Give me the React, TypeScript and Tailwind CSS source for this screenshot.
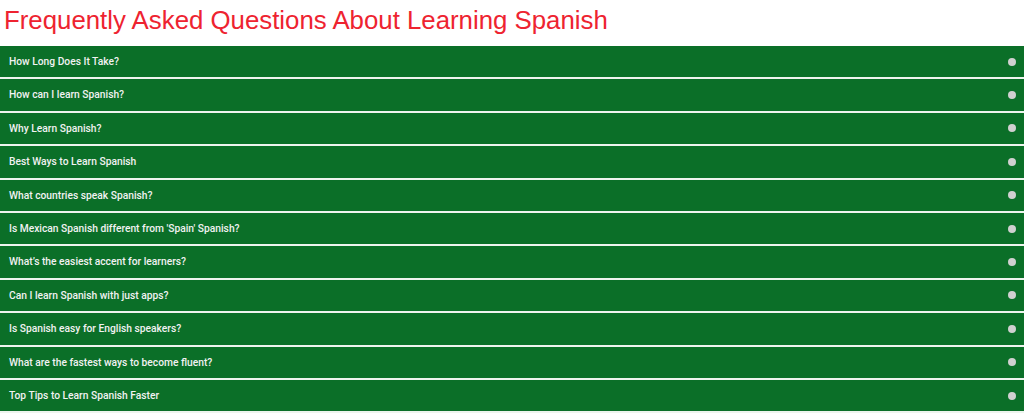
const questions = [
  'How Long Does It Take?',
  'How can I learn Spanish?',
  'Why Learn Spanish?',
  'Best Ways to Learn Spanish',
  'What countries speak Spanish?',
  "Is Mexican Spanish different from 'Spain' Spanish?",
  'What\u2019s the easiest accent for learners?',
  'Can I learn Spanish with just apps?',
  'Is Spanish easy for English speakers?',
  'What are the fastest ways to become fluent?',
  'Top Tips to Learn Spanish Faster',
]

export default function App() {
  return (
    <div className="w-[1024px] h-[418px] bg-white overflow-hidden">
      <div className="h-[46px] pl-[4px] pt-[5px]">
        <h1 className="text-[25.8px] leading-[30px] text-[#ee2330] font-['Liberation_Sans',Arial,sans-serif]">
          Frequently Asked Questions About Learning Spanish
        </h1>
      </div>
      <div className="flex flex-col">
        {questions.map((q) => (
          <div
            key={q}
            className="flex items-center justify-between h-[33.4px] pl-[9px] pr-[8px] bg-[#0b6f28] border-b-[2px] border-[#eef4ee] font-['Roboto',sans-serif] text-[10.25px] font-medium text-[#f2f2f2]"
          >
            <span>{q}</span>
            <span className="w-[8px] h-[8px] rounded-full bg-[#d0d0d0]" />
          </div>
        ))}
      </div>
    </div>
  )
}
